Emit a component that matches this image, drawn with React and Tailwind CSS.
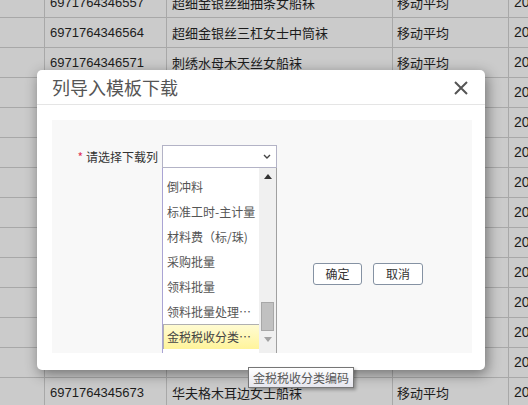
import React from 'react';

const rows = [
    ['6971764346557', '超细金银丝细抽条女船袜', '移动平均', '2024-03-12'],
    ['6971764346564', '超细金银丝三杠女士中筒袜', '移动平均', '2024-03-12'],
    ['6971764346571', '刺绣水母木天丝女船袜', '移动平均', '2024-03-12'],
    ['6971764346588', '刺绣小熊木天丝女船袜', '移动平均', '2024-03-12'],
    ['6971764346595', '纯色棉质男士中筒袜', '移动平均', '2024-03-12'],
    ['6971764346601', '纯色棉质女士短袜', '移动平均', '2024-03-12'],
    ['6971764346618', '条纹棉质男士船袜', '移动平均', '2024-03-12'],
    ['6971764346625', '网眼透气女士船袜', '移动平均', '2024-03-12'],
    ['6971764346632', '蕾丝花边女士短袜', '移动平均', '2024-03-12'],
    ['6971764346649', '卡通印花儿童中筒袜', '移动平均', '2024-03-12'],
    ['6971764346656', '毛圈加厚男士中筒袜', '移动平均', '2024-03-12'],
    ['6971764346663', '木耳边女士中筒袜', '移动平均', '2024-03-12'],
    ['6971764345666', '华夫格木耳边女士短袜', '移动平均', '2024-03-12'],
    ['6971764345673', '华夫格木耳边女士船袜', '移动平均', '2024-03-12'],
];

const options = ['倒冲料', '标准工时-主计量', '材料费（标/珠)', '采购批量', '领料批量', '领料批量处理…', '金税税收分类…'];

const cjk = "font-['Noto_Sans_CJK_SC','Microsoft_YaHei',sans-serif]";

const App = () => {
    return (
        <div className={`relative h-[405px] w-[528px] overflow-hidden bg-[#cbcbcb] text-[13px] text-[#1c1c1c] ${cjk}`}>
            {/* background table */}
            <div className="-mt-[12px]">
                {rows.map((r, i) => (
                    <div key={i} className="flex h-[30px] border-b border-[#a8a8a8]">
                        <div className="w-[45px] shrink-0 border-r border-[#a8a8a8]" />
                        <div className="flex w-[122px] shrink-0 items-center border-r border-[#a8a8a8] pl-[5px] font-['Liberation_Sans',sans-serif]">
                            {r[0]}
                        </div>
                        <div className="flex w-[226px] shrink-0 items-center border-r border-[#a8a8a8] pl-[5px]">
                            {r[1]}
                        </div>
                        <div className="flex w-[116px] shrink-0 items-center border-r border-[#a8a8a8] pl-[4px]">
                            {r[2]}
                        </div>
                        <div className="flex flex-1 items-center overflow-hidden whitespace-nowrap pl-[5px] font-['Liberation_Sans',sans-serif] text-[14px]">
                            {r[3]}
                        </div>
                    </div>
                ))}
            </div>

            {/* dialog */}
            <div className="absolute left-[37px] top-[70px] flex h-[300px] w-[448px] flex-col rounded-[5px] bg-white shadow-[2px_4px_14px_rgba(0,0,0,0.45)]">
                <div className="flex h-[35px] items-center justify-between border-b border-[#e5e5e5] pl-[15px] pr-[17px]">
                    <span className="text-[18px] text-[#555]">列导入模板下载</span>
                    <svg width="14" height="14" viewBox="0 0 14 14" className="mt-[1px]">
                        <path d="M1 1L13 13M13 1L1 13" stroke="#555" strokeWidth="2" />
                    </svg>
                </div>
                <div className="pl-[15px] pr-[13px] pt-[15px]">
                    <div className="h-[233px] bg-[#f8f8f8] pt-[25px]">
                        <div className="flex items-center">
                            <div className="flex w-[110px] items-center justify-end gap-[3px] pr-[4px] text-[12px] text-[#333]">
                                <span className="text-[#e0305a]">*</span>
                                <span>请选择下载列</span>
                            </div>
                            <div className="relative w-[115px]">
                                <div className="flex h-[23px] items-center justify-end border border-[#b3b3c6] bg-white pr-[5px]">
                                    <svg width="8" height="5" viewBox="0 0 8 5">
                                        <path d="M1 1L4 4L7 1" stroke="#444" strokeWidth="1.4" fill="none" />
                                    </svg>
                                </div>
                                <div className="absolute left-0 top-full z-10 flex h-[185px] w-[115px] border-l border-r border-l-[#aaa4d4] border-r-[#a0a0a0] bg-white text-[12px] text-[#555]">
                                    <div className="flex w-[96px] flex-col overflow-hidden pt-[6px]">
                                        {options.map((o, i) =>
                                            i === options.length - 1 ? (
                                                <div key={i} className="flex h-[25px] shrink-0 items-center whitespace-nowrap border-l border-t border-[#b0b0b0] bg-gradient-to-b from-[#fffbd2] to-[#fff49a] pl-[3px] text-[#444]">
                                                    {o}
                                                </div>
                                            ) : (
                                                <div key={i} className="flex h-[25px] shrink-0 items-center whitespace-nowrap pl-[4px]">
                                                    {o}
                                                </div>
                                            )
                                        )}
                                    </div>
                                    <div className="flex w-[17px] flex-col bg-[#f0f0f0]">
                                        <div className="flex h-[17px] items-center justify-center">
                                            <svg width="8" height="5" viewBox="0 0 8 5">
                                                <path d="M0 5L4 0L8 5Z" fill="#333" />
                                            </svg>
                                        </div>
                                        <div className="relative h-[146px]">
                                            <div className="absolute left-[2px] top-[117px] h-[29px] w-[13px] border border-[#a8a8a8] bg-[#c1c1c1]" />
                                        </div>
                                        <div className="flex h-[17px] items-center justify-center">
                                            <svg width="8" height="5" viewBox="0 0 8 5">
                                                <path d="M0 0L4 5L8 0Z" fill="#a3a3a3" />
                                            </svg>
                                        </div>
                                    </div>
                                </div>
                            </div>
                        </div>
                        <div className="mt-[95px] flex gap-[11px] pl-[261px]">
                            <button className="flex h-[22px] w-[49px] items-center justify-center rounded-[3px] border border-[#8592a3] bg-white text-[12px] text-[#333]">
                                确定
                            </button>
                            <button className="flex h-[22px] w-[50px] items-center justify-center rounded-[3px] border border-[#8592a3] bg-white text-[12px] text-[#333]">
                                取消
                            </button>
                        </div>
                    </div>
                </div>
            </div>

            {/* tooltip */}
            <div className="absolute left-[248px] top-[367px] flex h-[21px] items-center border border-[#767676] bg-gradient-to-b from-white to-[#e6e6ee] px-[4px] text-[12px] text-[#575757] shadow-[2px_2px_3px_rgba(0,0,0,0.3)]">
                金税税收分类编码
            </div>
        </div>
    );
};

export default App;
